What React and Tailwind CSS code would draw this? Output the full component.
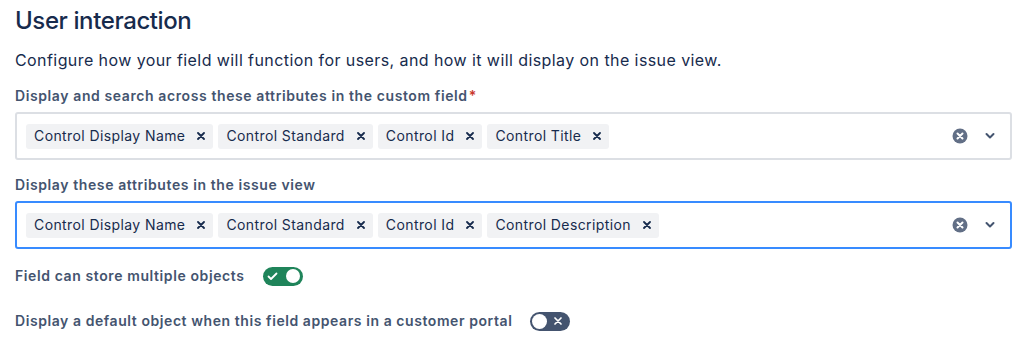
import React from "react";

const field1 = ["Control Display Name", "Control Standard", "Control Id", "Control Title"];
const field2 = ["Control Display Name", "Control Standard", "Control Id", "Control Description"];

const Tag = ({ label }) => (
  <div className="flex items-center h-[25px] rounded-[3px] bg-[#F1F2F4] text-[#172B4D]">
    <span className="pl-2 pr-1 text-[14px] leading-[20px] tracking-[0.4px]">{label}</span>
    <span className="w-6 h-full flex items-center justify-center">
      <svg width="8" height="8" viewBox="0 0 8 8">
        <path d="M1 1L7 7M7 1L1 7" stroke="#172B4D" strokeWidth="1.8" strokeLinecap="round" />
      </svg>
    </span>
  </div>
);

const MultiSelect = ({ items, focused }) => (
  <div
    className={
      focused
        ? "flex items-center h-[48px] rounded-[3px] border-2 border-[#388BFF] bg-white pl-[9px] pr-[12px]"
        : "flex items-center h-[48px] rounded-[3px] border-2 border-[#DCDFE4] bg-white pl-[9px] pr-[12px]"
    }
  >
    <div className="flex flex-1 gap-[5px]">
      {items.map((t, i) => (
        <Tag key={i} label={t} />
      ))}
    </div>
    <svg width="16" height="16" viewBox="0 0 16 16" className="mr-[16px]">
      <circle cx="8" cy="8" r="7.5" fill="#626F86" />
      <path d="M5.5 5.5L10.5 10.5M10.5 5.5L5.5 10.5" stroke="white" strokeWidth="2" strokeLinecap="round" />
    </svg>
    <svg width="12" height="8" viewBox="0 0 12 8" className="mr-[2px]">
      <path d="M2.5 2L6 5.5L9.5 2" stroke="#44546F" strokeWidth="2" fill="none" strokeLinecap="round" strokeLinejoin="round" />
    </svg>
  </div>
);

const Toggle = ({ on }) =>
  on ? (
    <div className="flex items-center justify-between w-[40px] h-[19px] rounded-full bg-[#1F845A] pl-[4px] pr-[3px]">
      <svg width="11" height="9" viewBox="0 0 11 9">
        <path d="M1.5 4.5L4 7L9.5 1.5" stroke="white" strokeWidth="1.8" fill="none" strokeLinecap="round" strokeLinejoin="round" />
      </svg>
      <div className="w-[14px] h-[14px] rounded-full bg-white" />
    </div>
  ) : (
    <div className="flex items-center justify-between w-[40px] h-[19px] rounded-full bg-[#44546F] pl-[2px] pr-[8px]">
      <div className="w-[15px] h-[15px] rounded-full bg-white" />
      <svg width="8" height="8" viewBox="0 0 8 8">
        <path d="M1 1L7 7M7 1L1 7" stroke="white" strokeWidth="1.7" strokeLinecap="round" />
      </svg>
    </div>
  );

export default function App() {
  return (
    <main className="w-[1027px] h-[349px] bg-white px-[15px] pt-[7px] font-['Inter',sans-serif] overflow-hidden">
      <h2 className="text-[24px] leading-[28px] font-medium text-[#172B4D] tracking-[-0.4px]">User interaction</h2>
      <p className="mt-[13px] text-[16px] leading-[24px] text-[#172B4D] tracking-[0.42px]">
        Configure how your field will function for users, and how it will display on the issue view.
      </p>
      <div className="mt-[14px] text-[14px] leading-[20px] font-semibold text-[#44546F] tracking-[0.6px]">
        Display and search across these attributes in the custom field
        <span className="text-[#C9372C] pl-[1px]">*</span>
      </div>
      <div className="mt-[6px]">
        <MultiSelect items={field1} />
      </div>
      <div className="mt-[15px] text-[14px] leading-[20px] font-semibold text-[#44546F] tracking-[0.6px]">
        Display these attributes in the issue view
      </div>
      <div className="mt-[6px]">
        <MultiSelect items={field2} focused />
      </div>
      <div className="mt-[17px] flex items-center gap-[18px]">
        <span className="text-[14px] leading-[20px] font-semibold text-[#44546F] tracking-[0.6px]">Field can store multiple objects</span>
        <Toggle on />
      </div>
      <div className="mt-[25px] flex items-center gap-[18px]">
        <span className="text-[14px] leading-[20px] font-semibold text-[#44546F] tracking-[0.57px]">
          Display a default object when this field appears in a customer portal
        </span>
        <Toggle />
      </div>
    </main>
  );
}
